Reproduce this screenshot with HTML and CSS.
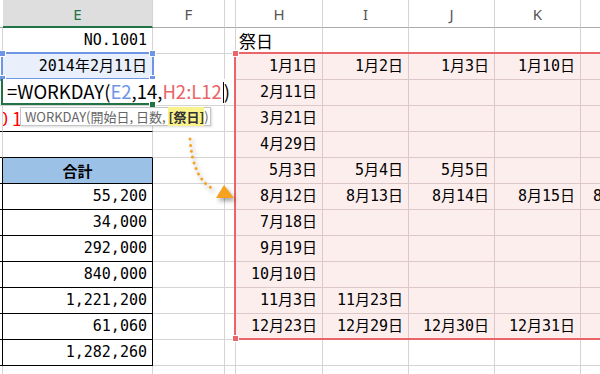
FILE: index.html
```html
<!DOCTYPE html>
<html lang="ja">
<head>
    <meta charset="UTF-8">
    <meta name="viewport" content="width=device-width, initial-scale=1.0">
    <title>WORKDAY 関数</title>
    <link rel="stylesheet" href="styles.css">
</head>
<body>
    <div class="wrap">
        <div class="sheet">
            <!-- header -->
            <div class="c h"></div><div class="c h hs">E</div><div class="c h">F</div><div class="c h"></div>
            <div class="c h">H</div><div class="c h">I</div><div class="c h">J</div><div class="c h">K</div><div class="c h">L</div>
            <!-- 1 -->
            <div class="c d"></div><div class="c e">NO.1001</div><div class="c"></div><div class="c"></div>
            <div class="c lbl">祭日</div><div class="c"></div><div class="c"></div><div class="c"></div><div class="c"></div>
            <!-- 2 -->
            <div class="c d"></div><div class="c e sb">2014年2月11日</div><div class="c"></div><div class="c"></div>
            <div class="c r">1月1日</div><div class="c r">1月2日</div><div class="c r">1月3日</div><div class="c r">1月10日</div><div class="c r"></div>
            <!-- 3 -->
            <div class="c d"></div><div class="c e"></div><div class="c"></div><div class="c"></div>
            <div class="c r">2月11日</div><div class="c r"></div><div class="c r"></div><div class="c r"></div><div class="c r"></div>
            <!-- 4 -->
            <div class="c d tb"></div><div class="c e tb red">0 1</div><div class="c"></div><div class="c"></div>
            <div class="c r">3月21日</div><div class="c r"></div><div class="c r"></div><div class="c r"></div><div class="c r"></div>
            <!-- 5 -->
            <div class="c d tb"></div><div class="c e tb"></div><div class="c"></div><div class="c"></div>
            <div class="c r">4月29日</div><div class="c r"></div><div class="c r"></div><div class="c r"></div><div class="c r"></div>
            <!-- 6 -->
            <div class="c d tb tr"></div><div class="c e tb tr th">合計</div><div class="c"></div><div class="c"></div>
            <div class="c r">5月3日</div><div class="c r">5月4日</div><div class="c r">5月5日</div><div class="c r"></div><div class="c r"></div>
            <!-- 7 -->
            <div class="c d tb tr"></div><div class="c e tb tr">55,200</div><div class="c"></div><div class="c"></div>
            <div class="c r">8月12日</div><div class="c r">8月13日</div><div class="c r">8月14日</div><div class="c r">8月15日</div><div class="c r">8月16日</div>
            <!-- 8 -->
            <div class="c d tb tr"></div><div class="c e tb tr">34,000</div><div class="c"></div><div class="c"></div>
            <div class="c r">7月18日</div><div class="c r"></div><div class="c r"></div><div class="c r"></div><div class="c r"></div>
            <!-- 9 -->
            <div class="c d tb tr"></div><div class="c e tb tr">292,000</div><div class="c"></div><div class="c"></div>
            <div class="c r">9月19日</div><div class="c r"></div><div class="c r"></div><div class="c r"></div><div class="c r"></div>
            <!-- 10 -->
            <div class="c d tb tr"></div><div class="c e tb tr">840,000</div><div class="c"></div><div class="c"></div>
            <div class="c r">10月10日</div><div class="c r"></div><div class="c r"></div><div class="c r"></div><div class="c r"></div>
            <!-- 11 -->
            <div class="c d tb tr"></div><div class="c e tb tr">1,221,200</div><div class="c"></div><div class="c"></div>
            <div class="c r">11月3日</div><div class="c r">11月23日</div><div class="c r"></div><div class="c r"></div><div class="c r"></div>
            <!-- 12 -->
            <div class="c d tb tr"></div><div class="c e tb tr">61,060</div><div class="c"></div><div class="c"></div>
            <div class="c r">12月23日</div><div class="c r">12月29日</div><div class="c r">12月30日</div><div class="c r">12月31日</div><div class="c r"></div>
            <!-- 13 -->
            <div class="c d tb tr"></div><div class="c e tb tr">1,282,260</div><div class="c"></div><div class="c"></div>
            <div class="c"></div><div class="c"></div><div class="c"></div><div class="c"></div><div class="c"></div>
            <!-- 14 -->
            <div class="c d"></div><div class="c e"></div><div class="c"></div><div class="c"></div>
            <div class="c"></div><div class="c"></div><div class="c"></div><div class="c"></div><div class="c"></div>
        </div>

        <!-- E2 reference box -->
        <div class="ref-blue">
            <span class="hd tl"></span><span class="hd tr2"></span><span class="hd bl"></span><span class="hd br"></span>
        </div>

        <!-- H2:L12 reference box -->
        <div class="ref-red">
            <span class="hd tl"></span><span class="hd bl"></span>
        </div>

        <!-- cell being edited -->
        <div class="edit">=WORKDAY(<span class="f-blue">E2</span>,14,<span class="f-red">H2:L12</span><span class="caret"></span>)</div>
        <div class="edit-line"></div>
        <div class="fill-handle"></div>

        <div class="tip">WORKDAY(開始日, 日数, <span class="arg">[祭日]</span>)</div>

        <svg class="arrow" width="600" height="374" viewBox="0 0 600 374">
            <path d="M190,139 Q193,180 214,189" fill="none" stroke="#f6a21e" stroke-width="3" stroke-linecap="round" stroke-dasharray="0 6"/>
            <polygon points="216,198 224,185 234,198" fill="#f6a21e"/>
        </svg>
    </div>
</body>
</html>
```

FILE: styles.css
```css
*{
    padding: 0;
    margin: 0;
    box-sizing: border-box;
}
html,body{
    overflow: hidden;
    background: #fff;
}
.wrap{
    position: relative;
    width: 600px;
    height: 374px;
    overflow: hidden;
    font-family: "DejaVu Sans Mono", "Noto Sans CJK JP", monospace;
    font-size: 15px;
    color: #000;
}

/* grid */
.sheet{
    display: grid;
    grid-template-columns: 3px 150px 72px 11px 87px 86px 86px 86px 75px;
    grid-template-rows: 28px repeat(14, 26px);
    width: 656px;
}
.c{
    border-right: 1px solid #d4d4d4;
    border-bottom: 1px solid #d4d4d4;
    padding: 0 5px;
    line-height: 25px;
    text-align: right;
    white-space: nowrap;
    overflow: hidden;
}
.d{
    padding: 0;
}
.h{
    font-family: "Noto Sans", sans-serif;
    font-size: 15px;
    line-height: 28px;
    color: #555;
    text-align: center;
    border-bottom-color: #ababab;
}
.hs{
    background: #dedede;
    color: #217346;
    border-bottom: 2px solid #217346;
}
.lbl{
    text-align: left;
    padding-left: 3px;
    font-family: "Noto Sans CJK JP", sans-serif;
    font-size: 17px;
}
.r{
    background: #fdeeee;
    border-color: #dcc8c8;
}
.sb{
    background: #e9f0fb;
}
.red{
    color: #f00;
    text-align: left;
    padding-left: 0;
    text-indent: -5px;
    font-family: "Noto Sans CJK JP", sans-serif;
    font-size: 18px;
}
.tb{
    border-bottom-color: #000;
}
.tr{
    border-right-color: #000;
}
.th{
    background: #9bc2e6;
    font-family: "Noto Sans CJK JP", sans-serif;
    font-weight: bold;
    text-align: center;
}

/* reference boxes */
.ref-blue{
    position: absolute;
    left: 1px;
    top: 52px;
    width: 153px;
    height: 28px;
    border: 2px solid #6f96e4;
}
.ref-blue .hd{
    background: #6f96e4;
}
.ref-red{
    position: absolute;
    left: 234px;
    top: 52px;
    width: 420px;
    height: 288px;
    border: 2px solid #ea6468;
}
.ref-red .hd{
    background: #ea6468;
}
.hd{
    position: absolute;
    width: 7px;
    height: 7px;
    border: 1px solid #fff;
}
.tl{ left: -4px; top: -4px; }
.tr2{ right: -4px; top: -4px; }
.bl{ left: -4px; bottom: -4px; }
.br{ right: -4px; bottom: -4px; }

/* editing cell */
.edit{
    position: absolute;
    left: 1px;
    top: 79px;
    width: 233px;
    height: 25px;
    background: #fff;
    border-left: 2px solid #217346;
    padding-left: 4px;
    font-family: "Noto Sans CJK JP", sans-serif;
    font-size: 18.5px;
    line-height: 25px;
    white-space: nowrap;
}
.f-blue{
    color: #6f96e4;
}
.f-red{
    color: #ea6468;
}
.caret{
    display: inline-block;
    width: 1px;
    height: 21px;
    margin-left: 1px;
    vertical-align: -4px;
    background: #000;
}
.edit-line{
    position: absolute;
    left: 1px;
    top: 103px;
    width: 152px;
    height: 2px;
    background: #217346;
}
.fill-handle{
    position: absolute;
    left: 149px;
    top: 101px;
    width: 7px;
    height: 7px;
    background: #217346;
    border: 1px solid #fff;
}

/* function tooltip */
.tip{
    position: absolute;
    left: 20px;
    top: 107px;
    width: 191px;
    height: 19px;
    padding-left: 4px;
    background: #fff;
    border: 1px solid #c6c6c6;
    box-shadow: 1px 1px 2px rgba(0, 0, 0, .15);
    font-family: "Noto Sans CJK JP", sans-serif;
    font-size: 13px;
    line-height: 17px;
    color: #666;
    white-space: nowrap;
}
.tip .arg{
    background: #faf28a;
    color: #333;
    font-weight: bold;
}

.arrow{
    position: absolute;
    left: 0;
    top: 0;
    pointer-events: none;
    filter: drop-shadow(2px 3px 2px rgba(0, 0, 0, .35));
}
```
